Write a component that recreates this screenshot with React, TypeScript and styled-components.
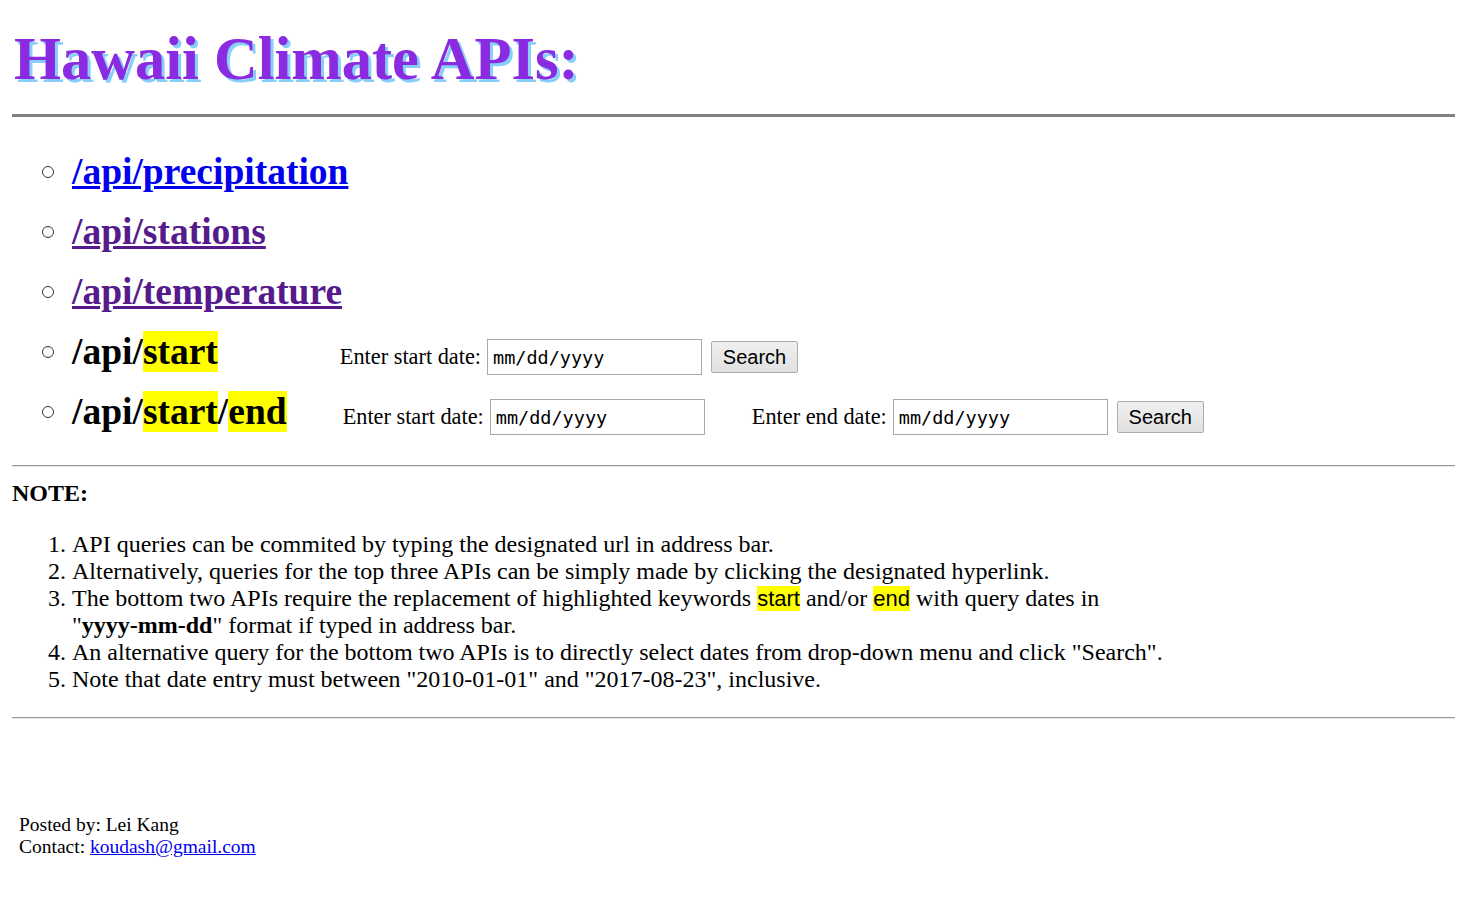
import React from "react";
import styled, { createGlobalStyle } from "styled-components";

const Global = createGlobalStyle`
  html, body { margin: 0; padding: 0; background: #fff; }
  body {
    font-family: "Liberation Serif", "Times New Roman", serif;
    color: #000;
    padding: 0 14px 0 12px;
  }
`;

const Title = styled.h1`
  margin: 24px 0 0 2px;
  font-family: "Liberation Serif", "Times New Roman", serif;
  font-weight: bold;
  font-size: 60.5px;
  line-height: 70px;
  color: #8a2be2;
  text-shadow: 3px 3px 0 #87cefa;
`;

const Rule = styled.hr<{ $thick?: boolean }>`
  margin: ${(p) => (p.$thick ? "20px 0 0" : "0")};
  border: 0;
  height: ${(p) => (p.$thick ? "3px" : "1px")};
  background: ${(p) => (p.$thick ? "#808080" : "#9a9a9a")};
  ${(p) => (p.$thick ? "" : "border-bottom: 1px solid #e4e4e4;")}
`;

const ApiList = styled.ul`
  list-style: none;
  margin: 24px 0 0;
  padding: 0 0 24px 30px;
`;

const ApiItem = styled.li`
  display: flex;
  align-items: center;
  height: 60px;
`;

const Bullet = styled.span`
  box-sizing: border-box;
  flex: none;
  width: 12px;
  height: 12px;
  border: 1.5px solid #333;
  border-radius: 50%;
  margin: 2px 18px 0 0;
`;

const Path = styled.span`
  font-size: 37.5px;
  font-weight: bold;
  white-space: nowrap;
`;

const ApiLink = styled.a<{ $visited?: boolean }>`
  color: ${(p) => (p.$visited ? "#551a8b" : "#0000ee")};
  text-decoration: underline;
`;

const Mark = styled.span`
  background: #ffff00;
`;

const DateForm = styled.form<{ $offset: number }>`
  display: flex;
  align-items: center;
  margin: 12px 0 0 ${(p) => p.$offset}px;
`;

const Label = styled.label<{ $gap?: number }>`
  font-size: 22.3px;
  margin-left: ${(p) => p.$gap ?? 0}px;
  margin-right: 6px;
  white-space: nowrap;
`;

const DateInput = styled.input`
  box-sizing: border-box;
  width: 215px;
  height: 36px;
  border: 1px solid #a9a9a9;
  padding: 0 5px;
  font-family: "DejaVu Sans Mono", "Liberation Mono", monospace;
  font-size: 18.5px;
  color: #000;
  &::placeholder { color: #000; }
`;

const SearchButton = styled.button`
  box-sizing: border-box;
  height: 32px;
  width: 87px;
  margin-left: 9px;
  padding: 0;
  border: 1px solid #adadad;
  border-radius: 2px;
  background: linear-gradient(#f0f0f0, #e1e1e1);
  font-family: "Liberation Sans", Arial, sans-serif;
  font-size: 20px;
  color: #000;
`;

const NoteTitle = styled.div`
  font-size: 24px;
  font-weight: bold;
  margin: 13px 0 0;
`;

const NoteList = styled.ol`
  margin: 24px 0 0;
  padding: 0 0 0 60px;
  font-size: 24px;
  line-height: 27px;
  max-width: 1130px;
`;

const NoWrap = styled.span`
  white-space: nowrap;
`;

const Keyword = styled.span`
  background: #ffff00;
  font-family: "Liberation Sans", Arial, sans-serif;
  font-size: 22px;
`;

const NoteRuleWrap = styled.div`
  margin-top: 24px;
`;

const Footer = styled.div`
  margin: 95px 0 0 7px;
  font-size: 19.5px;
  line-height: 22px;
`;

const MailLink = styled.a`
  color: #0000ee;
  text-decoration: underline;
`;

export default function App() {
  return (
    <>
      <Global />
      <Title>Hawaii Climate APIs:</Title>
      <Rule $thick />
      <ApiList>
        <ApiItem>
          <Bullet />
          <Path>
            <ApiLink href="#">/api/precipitation</ApiLink>
          </Path>
        </ApiItem>
        <ApiItem>
          <Bullet />
          <Path>
            <ApiLink href="#" $visited>/api/stations</ApiLink>
          </Path>
        </ApiItem>
        <ApiItem>
          <Bullet />
          <Path>
            <ApiLink href="#" $visited>/api/temperature</ApiLink>
          </Path>
        </ApiItem>
        <ApiItem>
          <Bullet />
          <Path>
            /api/<Mark>start</Mark>
          </Path>
          <DateForm $offset={122} onSubmit={(e) => e.preventDefault()}>
            <Label>Enter start date:</Label>
            <DateInput placeholder="mm/dd/yyyy" />
            <SearchButton type="submit">Search</SearchButton>
          </DateForm>
        </ApiItem>
        <ApiItem>
          <Bullet />
          <Path>
            /api/<Mark>start</Mark>/<Mark>end</Mark>
          </Path>
          <DateForm $offset={56} onSubmit={(e) => e.preventDefault()}>
            <Label>Enter start date:</Label>
            <DateInput placeholder="mm/dd/yyyy" />
            <Label $gap={47}>Enter end date:</Label>
            <DateInput placeholder="mm/dd/yyyy" />
            <SearchButton type="submit">Search</SearchButton>
          </DateForm>
        </ApiItem>
      </ApiList>
      <Rule />
      <NoteTitle>NOTE:</NoteTitle>
      <NoteList>
        <li>API queries can be commited by typing the designated url in address bar.</li>
        <li>Alternatively, queries for the top three APIs can be simply made by clicking the designated hyperlink.</li>
        <li>
          The bottom two APIs require the replacement of highlighted keywords <Keyword>start</Keyword> and/or{" "}
          <Keyword>end</Keyword> with query dates in{" "}
          <NoWrap>
            "<b>yyyy-mm-dd</b>"
          </NoWrap>{" "}
          format if typed in address bar.
        </li>
        <li>An alternative query for the bottom two APIs is to directly select dates from drop-down menu and click "Search".</li>
        <li>Note that date entry must between "2010-01-01" and "2017-08-23", inclusive.</li>
      </NoteList>
      <NoteRuleWrap>
        <Rule />
      </NoteRuleWrap>
      <Footer>
        Posted by: Lei Kang
        <br />
        Contact: <MailLink href="#">koudash@gmail.com</MailLink>
      </Footer>
    </>
  );
}
